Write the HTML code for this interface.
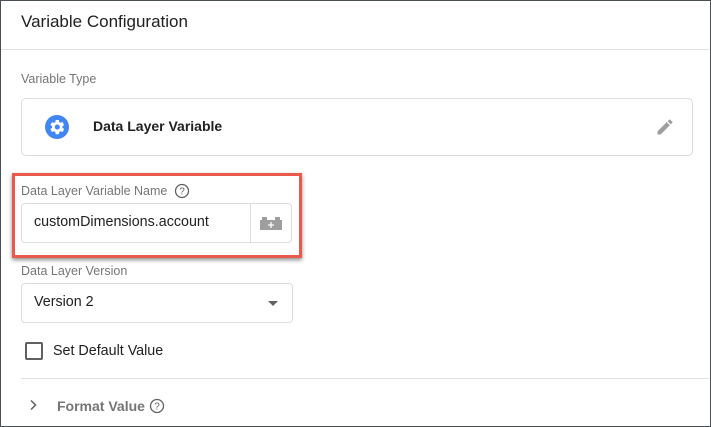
<!DOCTYPE html>
<html><head><style>
body{margin:0;width:711px;height:427px;overflow:hidden;background:#fff;font-family:"Liberation Sans",Arial,sans-serif;}
.frame{position:absolute;left:0;top:0;width:709px;height:425px;border:1px solid #4a4f55;}
.abs{position:absolute;}
.lbl{font-size:12.5px;color:#757575;}
</style></head><body>
<div class="frame"></div>
<div class="abs" style="left:21px;top:12px;font-size:17px;color:#212121;">Variable Configuration</div>
<div class="abs" style="left:1px;top:49px;width:708px;height:1px;background:#e0e0e0"></div>
<div class="abs lbl" style="left:21px;top:72px;">Variable Type</div>
<div class="abs" style="left:21px;top:98px;width:670px;height:56px;border:1px solid #dadce0;border-radius:5px;"></div>
<svg class="abs" style="left:45px;top:115px" width="24" height="24" viewBox="0 0 24 24"><circle cx="12" cy="12" r="12" fill="#4285f4"/><path fill="#fff" d="M17.4 12.7c0-.2.1-.5.1-.7s0-.5-.1-.7l1.5-1.2c.1-.1.2-.3.1-.4l-1.4-2.5c-.1-.2-.3-.2-.4-.2l-1.8.7c-.4-.3-.8-.5-1.2-.7L14 5.3c0-.2-.2-.3-.3-.3h-2.8c-.2 0-.3.1-.3.3l-.3 1.9c-.4.2-.8.4-1.2.7l-1.8-.7c-.2-.1-.3 0-.4.2L5.5 9.7c-.1.2 0 .3.1.4l1.5 1.2c0 .2-.1.5-.1.7s0 .5.1.7l-1.5 1.2c-.1.1-.2.3-.1.4l1.4 2.5c.1.2.3.2.4.2l1.8-.7c.4.3.8.5 1.2.7l.3 1.9c0 .2.2.3.3.3h2.8c.2 0 .3-.1.3-.3l.3-1.9c.4-.2.8-.4 1.2-.7l1.8.7c.2.1.3 0 .4-.2l1.4-2.5c.1-.2 0-.3-.1-.4zM12.3 14.5c-1.4 0-2.5-1.1-2.5-2.5s1.1-2.5 2.5-2.5 2.5 1.1 2.5 2.5-1.1 2.5-2.5 2.5z"/></svg>
<div class="abs" style="left:93px;top:118px;font-size:14px;font-weight:bold;color:#212121;">Data Layer Variable</div>
<svg class="abs" style="left:655px;top:117px" width="20" height="20" viewBox="0 0 24 24"><path fill="#9e9e9e" d="M3 17.25V21h3.75L17.8 9.94l-3.75-3.75L3 17.25zM20.7 7.04a1 1 0 000-1.41l-2.34-2.34a1 1 0 00-1.41 0l-1.83 1.83 3.75 3.75 1.83-1.83z"/></svg>
<div class="abs" style="left:12px;top:173px;width:284px;height:79px;border:3px solid #ea5a4c;box-shadow:0 2px 4px rgba(0,0,0,.45);"></div>
<div class="abs lbl" style="left:21px;top:184px;">Data Layer Variable Name</div>
<svg class="abs" style="left:174px;top:183px" width="16" height="16" viewBox="0 0 16 16"><circle cx="8" cy="8" r="6.5" fill="none" stroke="#616161" stroke-width="1.3"/><text x="8" y="11.6" font-size="10" text-anchor="middle" fill="#616161" font-family="Liberation Sans">?</text></svg>
<div class="abs" style="left:21px;top:203px;width:269px;height:38px;border:1px solid #dadce0;border-radius:4px;"></div>
<div class="abs" style="left:250px;top:204px;width:1px;height:38px;background:#dadce0"></div>
<div class="abs" style="left:34px;top:214px;font-size:14.3px;color:#212121;">customDimensions.account</div>
<svg class="abs" style="left:259px;top:216px" width="24" height="14" viewBox="0 0 24 14"><rect x="1" y="4" width="22" height="10" fill="#9e9e9e"/><rect x="3" y="1" width="5" height="4" fill="#9e9e9e"/><rect x="16" y="1" width="5" height="4" fill="#9e9e9e"/><path d="M12 6v6M9 9h6" stroke="#fff" stroke-width="1.3"/></svg>
<div class="abs lbl" style="left:21px;top:264px;">Data Layer Version</div>
<div class="abs" style="left:21px;top:283px;width:270px;height:38px;border:1px solid #dadce0;border-radius:4px;"></div>
<div class="abs" style="left:34px;top:294px;font-size:14.3px;color:#212121;">Version 2</div>
<div class="abs" style="left:268px;top:301px;width:0;height:0;border-left:5px solid transparent;border-right:5px solid transparent;border-top:5px solid #616161;"></div>
<div class="abs" style="left:25px;top:342px;width:14px;height:14px;border:2px solid #616161;border-radius:2px;"></div>
<div class="abs" style="left:53px;top:343px;font-size:14.3px;color:#212121;">Set Default Value</div>
<div class="abs" style="left:21px;top:378px;width:688px;height:1px;background:#e0e0e0"></div>
<svg class="abs" style="left:28px;top:399px" width="10" height="12" viewBox="0 0 10 12"><path d="M3 1.5l4.5 4.5L3 10.5" fill="none" stroke="#616161" stroke-width="1.5"/></svg>
<div class="abs" style="left:57px;top:398px;font-size:14px;font-weight:bold;color:#757575;">Format Value</div>
<svg class="abs" style="left:149px;top:398px" width="16" height="16" viewBox="0 0 16 16"><circle cx="8" cy="8" r="6.5" fill="none" stroke="#616161" stroke-width="1.3"/><text x="8" y="11.6" font-size="10" text-anchor="middle" fill="#616161" font-family="Liberation Sans">?</text></svg>
</body></html>
